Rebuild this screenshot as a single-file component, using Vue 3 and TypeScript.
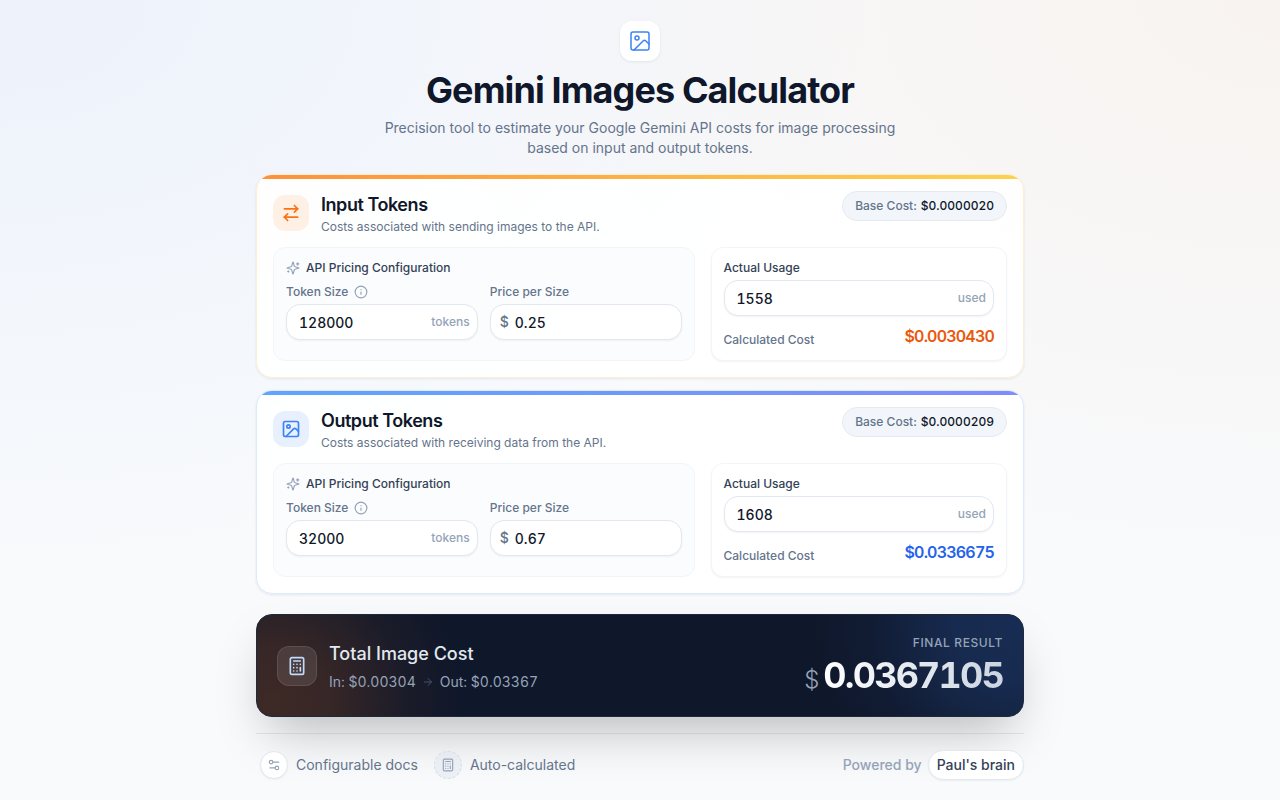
<script setup lang="ts">
import { computed, reactive } from 'vue'

type IconName = 'image' | 'swap'

interface TokenGroup {
  id: string
  tone: string
  icon: IconName
  title: string
  description: string
  size: string
  price: string
  used: string
}

const groups = reactive<TokenGroup[]>([
  {
    id: 'input',
    tone: 'orange',
    icon: 'swap',
    title: 'Input Tokens',
    description: 'Costs associated with sending images to the API.',
    size: '128000',
    price: '0.25',
    used: '1558',
  },
  {
    id: 'output',
    tone: 'blue',
    icon: 'image',
    title: 'Output Tokens',
    description: 'Costs associated with receiving data from the API.',
    size: '32000',
    price: '0.67',
    used: '1608',
  },
])

const baseCost = (g: TokenGroup): number => (Number(g.size) > 0 ? Number(g.price) / Number(g.size) : 0)
const usageCost = (g: TokenGroup): number => baseCost(g) * Number(g.used)
const total = computed(() => groups.reduce((sum, g) => sum + usageCost(g), 0))
</script>

<template>
  <div class="page">
    <main class="shell">
      <header class="hero">
        <div class="hero-icon">
          <svg class="icon" width="24" height="24" viewBox="0 0 24 24" stroke-width="1.5" aria-hidden="true">
            <rect x="3" y="3" width="18" height="18" rx="2" />
            <circle cx="9" cy="9" r="2" />
            <path d="m21 15-3.086-3.086a2 2 0 0 0-2.828 0L6 21" />
          </svg>
        </div>
        <h1>Gemini Images Calculator</h1>
        <p>Precision tool to estimate your Google Gemini API costs for image processing based on input and output tokens.</p>
      </header>

      <section v-for="g in groups" :key="g.id" class="card" :class="g.tone">
        <div class="card-head">
          <div class="card-icon">
            <svg class="icon" width="20" height="20" viewBox="0 0 24 24" stroke-width="2" aria-hidden="true">
              <template v-if="g.icon === 'swap'">
                <path d="m16 3 4 4-4 4" />
                <path d="M20 7H4" />
                <path d="m8 21-4-4 4-4" />
                <path d="M4 17h16" />
              </template>
              <template v-else>
                <rect x="3" y="3" width="18" height="18" rx="2" />
                <circle cx="9" cy="9" r="2" />
                <path d="m21 15-3.086-3.086a2 2 0 0 0-2.828 0L6 21" />
              </template>
            </svg>
          </div>
          <div class="card-titles">
            <h2>{{ g.title }}</h2>
            <p>{{ g.description }}</p>
          </div>
          <div class="base">
            <span>Base Cost:</span>
            <strong>${{ baseCost(g).toFixed(7) }}</strong>
          </div>
        </div>

        <div class="panels">
          <div class="panel config">
            <h3>
              <svg class="icon" width="14" height="14" viewBox="0 0 24 24" stroke-width="2" aria-hidden="true">
                <path d="M9.937 15.5A2 2 0 0 0 8.5 14.063l-6.135-1.582a.5.5 0 0 1 0-.962L8.5 9.936A2 2 0 0 0 9.937 8.5l1.582-6.135a.5.5 0 0 1 .963 0L14.063 8.5A2 2 0 0 0 15.5 9.937l6.135 1.581a.5.5 0 0 1 0 .964L15.5 14.063a2 2 0 0 0-1.437 1.437l-1.582 6.135a.5.5 0 0 1-.963 0z" />
                <path d="M20 3v4" />
                <path d="M22 5h-4" />
                <path d="M4 17v2" />
                <path d="M5 18H3" />
              </svg>
              API Pricing Configuration
            </h3>
            <div class="fields">
              <div class="field">
                <div class="label-row">
                  <label :for="g.id + '-size'">Token Size</label>
                  <svg class="icon" width="14" height="14" viewBox="0 0 24 24" stroke-width="2" aria-hidden="true">
                    <circle cx="12" cy="12" r="10" />
                    <path d="M12 16v-4" />
                    <path d="M12 8h.01" />
                  </svg>
                </div>
                <div class="box">
                  <input :id="g.id + '-size'" v-model="g.size" type="text" inputmode="numeric" />
                  <span class="unit">tokens</span>
                </div>
              </div>
              <div class="field">
                <div class="label-row">
                  <label :for="g.id + '-price'">Price per Size</label>
                </div>
                <div class="box money">
                  <span class="sign">$</span>
                  <input :id="g.id + '-price'" v-model="g.price" type="text" inputmode="decimal" />
                </div>
              </div>
            </div>
          </div>

          <div class="panel usage">
            <label class="usage-label" :for="g.id + '-used'">Actual Usage</label>
            <div class="box">
              <input :id="g.id + '-used'" v-model="g.used" type="text" inputmode="numeric" />
              <span class="unit">used</span>
            </div>
            <div class="result">
              <span>Calculated Cost</span>
              <output :for="g.id + '-used'">${{ usageCost(g).toFixed(7) }}</output>
            </div>
          </div>
        </div>
      </section>

      <section class="total">
        <div class="total-icon">
          <svg class="icon" width="20" height="20" viewBox="0 0 24 24" stroke-width="2" aria-hidden="true">
            <rect x="4" y="2" width="16" height="20" rx="2" />
            <path d="M8 6h8M16 14v4M16 10h.01M12 10h.01M8 10h.01M12 14h.01M8 14h.01M12 18h.01M8 18h.01" />
          </svg>
        </div>
        <div class="total-text">
          <h2>Total Image Cost</h2>
          <p>
            <span>In: ${{ usageCost(groups[0]).toFixed(5) }}</span>
            <svg class="icon" width="12" height="12" viewBox="0 0 24 24" stroke-width="2" aria-hidden="true">
              <path d="M5 12h14" />
              <path d="m12 5 7 7-7 7" />
            </svg>
            <span>Out: ${{ usageCost(groups[1]).toFixed(5) }}</span>
          </p>
        </div>
        <div class="final">
          <span class="final-label">FINAL RESULT</span>
          <div class="final-value">
            <span class="final-sign">$</span>
            <span class="final-number">{{ total.toFixed(7) }}</span>
          </div>
        </div>
      </section>

      <footer class="foot">
        <div class="notes">
          <div class="note">
            <span class="dot">
              <svg class="icon" width="14" height="14" viewBox="0 0 24 24" stroke-width="2" aria-hidden="true">
                <path d="M20 7h-9" />
                <path d="M14 17H5" />
                <circle cx="17" cy="17" r="3" />
                <circle cx="7" cy="7" r="3" />
              </svg>
            </span>
            Configurable docs
          </div>
          <div class="note">
            <span class="dot dashed">
              <svg class="icon" width="14" height="14" viewBox="0 0 24 24" stroke-width="2" aria-hidden="true">
                <rect x="4" y="2" width="16" height="20" rx="2" />
                <path d="M8 6h8M16 14v4M16 10h.01M12 10h.01M8 10h.01M12 14h.01M8 14h.01M12 18h.01M8 18h.01" />
              </svg>
            </span>
            Auto-calculated
          </div>
        </div>
        <div class="powered">
          Powered by
          <span class="brand">Paul's brain</span>
        </div>
      </footer>
    </main>
  </div>
</template>

<style>
body {
  margin: 0;
  background: #f8fafc;
}
</style>

<style scoped>
* {
  box-sizing: border-box;
}

.page {
  min-height: 100vh;
  padding: 21px 16px 20px;
  font-family: Inter, "Liberation Sans", sans-serif;
  font-size: 14px;
  line-height: 20px;
  -webkit-font-smoothing: antialiased;
  color: #0f172a;
  background:
    radial-gradient(ellipse 71% 71% at 0% 0%, rgba(59, 115, 240, 0.06), rgba(59, 115, 240, 0)),
    radial-gradient(ellipse 71% 71% at 100% 0%, rgba(249, 115, 22, 0.05), rgba(249, 115, 22, 0)),
    #f8fafc;
}

h1,
h2,
h3,
p {
  margin: 0;
}

.icon {
  display: block;
  flex: none;
  fill: none;
  stroke: currentColor;
  stroke-linecap: round;
  stroke-linejoin: round;
}

.shell {
  display: flex;
  flex-direction: column;
  gap: 12px;
  max-width: 768px;
  margin: 0 auto;
}

.hero {
  display: flex;
  flex-direction: column;
  align-items: center;
  margin-bottom: 4px;
  text-align: center;
}

.hero-icon {
  padding: 8px;
  border-radius: 12px;
  background: #fff;
  color: #3b82f6;
  box-shadow: 0 1px 3px rgba(15, 23, 42, 0.08);
}

.hero h1 {
  margin: 8px 0 7px;
  font-size: 36px;
  line-height: 42px;
  font-weight: 700;
  letter-spacing: -0.025em;
}

.hero p {
  max-width: 512px;
  color: #64748b;
}

.card {
  position: relative;
  padding: 16px;
  border: 1px solid #ffedd5;
  border-radius: 16px;
  overflow: hidden;
  background: rgba(255, 255, 255, 0.9);
  box-shadow: 0 1px 3px rgba(15, 23, 42, 0.08);
}

.card.blue {
  border-color: #dbeafe;
}

.card::before {
  content: "";
  position: absolute;
  inset: 0 0 auto;
  height: 4px;
  background: linear-gradient(to right, #fb923c, #fcd34d);
}

.card.blue::before {
  background: linear-gradient(to right, #60a5fa, #818cf8);
}

.card-head {
  display: flex;
  align-items: center;
  gap: 12px;
  margin-bottom: 12px;
}

.card-icon {
  padding: 8px;
  border-radius: 12px;
  background: #fff0e6;
  color: #f97316;
}

.blue .card-icon {
  background: #e8f0fe;
  color: #3b82f6;
}

.card-titles {
  flex: 1;
}

.card-titles h2 {
  font-size: 18px;
  line-height: 28px;
  font-weight: 600;
  letter-spacing: -0.025em;
}

.card-titles p {
  font-size: 12px;
  line-height: 16px;
  color: #64748b;
}

.base {
  display: flex;
  gap: 4px;
  align-self: flex-start;
  padding: 6px 12px;
  border: 1px solid #e5eaf1;
  border-radius: 15px;
  background: #f2f6fa;
  font-size: 12px;
  line-height: 16px;
  font-weight: 500;
  color: #64748b;
}

.base strong {
  font-weight: 500;
  font-variant-numeric: tabular-nums;
  color: #0f172a;
}

.panels {
  display: grid;
  grid-template-columns: repeat(12, minmax(0, 1fr));
  gap: 16px;
}

.panel {
  padding: 12px;
  border: 1px solid #f1f5f9;
  border-radius: 12px;
}

.config {
  grid-column: span 7;
  background: #fbfcfe;
}

.usage {
  grid-column: span 5;
  background: #fff;
  box-shadow: 0 1px 2px rgba(15, 23, 42, 0.05);
}

.config h3 {
  display: flex;
  align-items: center;
  gap: 6px;
  margin-bottom: 8px;
  font-size: 12px;
  line-height: 16px;
  font-weight: 500;
  color: #334155;
}

.config .icon {
  color: #94a3b8;
}

.fields {
  display: grid;
  grid-template-columns: repeat(2, minmax(0, 1fr));
  gap: 12px;
}

.label-row {
  display: flex;
  align-items: center;
  gap: 6px;
  margin-bottom: 4px;
  font-size: 12px;
  line-height: 16px;
  font-weight: 500;
  color: #64748b;
}

.usage-label {
  display: block;
  margin-bottom: 4px;
  font-size: 12px;
  line-height: 16px;
  font-weight: 500;
  color: #334155;
}

.box {
  display: flex;
  align-items: center;
  height: 36px;
  padding: 0 7px 0 12px;
  border: 1px solid #e2e8f0;
  border-radius: 14px;
  background: #fff;
  box-shadow: 0 1px 2px rgba(15, 23, 42, 0.05);
}

.box.money {
  gap: 6px;
  padding-left: 9px;
}

.box:focus-within {
  border-color: #94a3b8;
}

.box input {
  flex: 1;
  min-width: 0;
  height: 34px;
  padding: 1px 0 0;
  border: 0;
  outline: 0;
  background: transparent;
  font: inherit;
  font-weight: 500;
  font-variant-numeric: tabular-nums;
  color: #0f172a;
}

.unit {
  font-size: 12px;
  line-height: 16px;
  font-weight: 500;
  color: #94a3b8;
}

.sign {
  font-weight: 500;
  color: #64748b;
}

.result {
  display: flex;
  align-items: flex-end;
  justify-content: space-between;
  margin-top: 8px;
  font-size: 12px;
  line-height: 16px;
  font-weight: 500;
  color: #64748b;
}

.result output {
  font-size: 16px;
  line-height: 24px;
  font-weight: 600;
  font-variant-numeric: tabular-nums;
  letter-spacing: -0.05em;
  color: #ea580c;
}

.blue .result output {
  color: #2563eb;
}

.total {
  display: flex;
  align-items: center;
  gap: 12px;
  margin-top: 8px;
  padding: 20px;
  border: 1px solid #1e293b;
  border-radius: 16px;
  background:
    radial-gradient(circle 190px at 16px 88px, rgba(249, 115, 22, 0.2), rgba(249, 115, 22, 0.17) 30%, rgba(249, 115, 22, 0.05) 70%, transparent),
    radial-gradient(circle 200px at calc(100% - 10px) 10px, rgba(59, 130, 246, 0.2), rgba(59, 130, 246, 0.18) 30%, rgba(59, 130, 246, 0.05) 70%, transparent),
    #0f172a;
  box-shadow: 0 25px 50px -12px rgba(0, 0, 0, 0.25);
}

.total-icon {
  padding: 9px;
  border: 1px solid rgba(255, 255, 255, 0.1);
  border-radius: 12px;
  background: rgba(255, 255, 255, 0.1);
  color: #bfdbfe;
}

.total-text {
  flex: 1;
}

.total-text h2 {
  margin-bottom: 4px;
  font-size: 18px;
  line-height: 28px;
  font-weight: 500;
  color: #e2e8f0;
}

.total-text p {
  display: flex;
  align-items: center;
  gap: 6px;
  font-variant-numeric: tabular-nums;
  color: #94a3b8;
}

.total-text .icon {
  color: #475569;
}

.final {
  display: flex;
  flex-direction: column;
  align-items: flex-end;
  gap: 4px;
}

.final-label {
  font-size: 12px;
  line-height: 16px;
  font-weight: 500;
  letter-spacing: 0.05em;
  color: #94a3b8;
}

.final-value {
  display: flex;
  align-items: baseline;
  gap: 4px;
}

.final-sign {
  font-size: 24px;
  line-height: 24px;
  font-weight: 300;
  color: #94a3b8;
}

.final-number {
  font-size: 36px;
  line-height: 41px;
  font-weight: 700;
  font-variant-numeric: tabular-nums;
  letter-spacing: -0.05em;
  color: transparent;
  background: linear-gradient(to right, #fff, #cbd5e1);
  background-clip: text;
}

.foot {
  display: flex;
  align-items: center;
  justify-content: space-between;
  margin-top: 4px;
  padding-top: 16px;
  border-top: 1px solid rgba(148, 163, 184, 0.25);
  color: #64748b;
}

.notes {
  display: flex;
  gap: 16px;
  padding-left: 4px;
}

.note {
  display: flex;
  align-items: center;
  gap: 8px;
}

.dot {
  padding: 6px;
  border: 1px solid #e2e8f0;
  border-radius: 50%;
  background: #fff;
  color: #94a3b8;
  box-shadow: 0 1px 2px rgba(15, 23, 42, 0.05);
}

.dot.dashed {
  border: 1px dashed #d5dde8;
  background: rgba(226, 232, 240, 0.5);
  box-shadow: none;
}

.powered {
  display: flex;
  align-items: center;
  gap: 6px;
  font-weight: 500;
  color: #94a3b8;
}

.brand {
  padding: 4px 8px;
  border: 1px solid #e2e8f0;
  border-radius: 15px;
  background: #fff;
  color: #334155;
  box-shadow: 0 1px 2px rgba(15, 23, 42, 0.05);
}
</style>
